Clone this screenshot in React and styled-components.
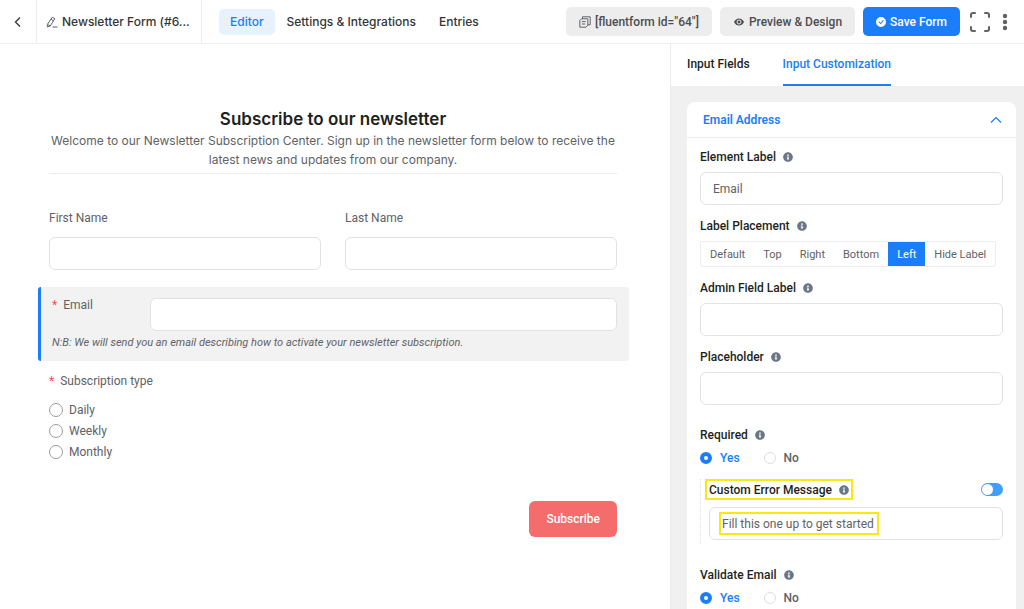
import { useState } from "react";
import styled, { createGlobalStyle } from "styled-components";
import { FaInfoCircle } from "react-icons/fa";
import { BsCheckCircleFill } from "react-icons/bs";

const GlobalStyle = createGlobalStyle`
  * {
    box-sizing: border-box;
  }
  body {
    margin: 0;
    background-color: #ffffff;
  }
  body, button, input {
    font-family: Roboto, "Liberation Sans", sans-serif;
    font-size: 12px;
    color: #606266;
  }
  button {
    padding: 0;
    border: none;
    background: none;
    cursor: pointer;
  }
`;

const PageWrap = styled.div`
  display: flex;
  flex-direction: column;
  height: 100vh;
`;

const TopBar = styled.header`
  display: flex;
  align-items: center;
  flex-shrink: 0;
  height: 44px;
  padding-right: 14px;
  border-bottom: 1px solid #efefef;
`;

const BackButton = styled.button`
  display: flex;
  align-items: center;
  justify-content: center;
  width: 37px;
  height: 100%;
  border-right: 1px solid #ececec;
`;

const FormName = styled.div`
  display: flex;
  align-items: center;
  gap: 4px;
  width: 165px;
  height: 100%;
  padding: 0 9px;
  border-right: 1px solid #ececec;
  font-family: Inter, "Liberation Sans", sans-serif;
  color: #353537;
  font-weight: 500;
  svg {
    flex-shrink: 0;
  }
  span {
    overflow: hidden;
    text-overflow: ellipsis;
    white-space: nowrap;
  }
`;

const Nav = styled.nav`
  display: flex;
  flex: 1;
  gap: 1px;
  padding-left: 17px;
`;

const NavLink = styled.a`
  padding: 0 11px;
  border-radius: 5px;
  line-height: 26px;
  font-family: Inter, "Liberation Sans", sans-serif;
  font-weight: 500;
  text-decoration: none;
  white-space: nowrap;
  color: ${(props) => (props.$active ? "#1a7efb" : "#353537")};
  background-color: ${(props) => (props.$active ? "#e8f2ff" : "transparent")};
`;

const Actions = styled.div`
  display: flex;
  align-items: center;
  gap: 8px;
`;

const ActionButton = styled.button`
  display: flex;
  align-items: center;
  gap: 4px;
  height: 29px;
  padding: 0 13px;
  border-radius: 5px;
  font-weight: 500;
  white-space: nowrap;
  color: ${(props) => (props.$primary ? "#ffffff" : "#4c4d4f")};
  background-color: ${(props) => (props.$primary ? "#1a7efb" : "#ededed")};
`;

const IconButton = styled.button`
  display: flex;
  align-items: center;
  padding: 0 2px;
  color: #606266;
`;

const ContentWrap = styled.div`
  display: flex;
  flex: 1;
  min-height: 0;
`;

const Canvas = styled.main`
  flex: 1;
  padding: 63px 41px 0 38px;
  overflow: auto;
  scrollbar-width: none;
`;

const Section = styled.section`
  padding: 0 12px 0 11px;
`;

const TitleWrap = styled.div`
  padding-bottom: 4px;
  border-bottom: 1px solid #ececec;
  font-family: Inter, "Liberation Sans", sans-serif;
  text-align: center;
  h1 {
    margin: 0;
    line-height: 24px;
    font-size: 17px;
    font-weight: 600;
    color: #1e1f21;
  }
  p {
    margin: 0;
    line-height: 19px;
  }
`;

const NameRow = styled.div`
  display: grid;
  grid-template-columns: 1fr 1fr;
  gap: 24px;
  padding: 34px 0 17px;
`;

const Field = styled.div`
  display: flex;
  flex-direction: column;
  gap: 9px;
  label {
    line-height: 20px;
  }
`;

const TextInput = styled.input`
  width: 100%;
  height: 33px;
  padding: 0 12px;
  border: 1px solid #e1e2e5;
  border-radius: 6px;
  background-color: #ffffff;
  outline: none;
`;

const SelectedField = styled.section`
  padding: 11px 12px 8px 11px;
  border-left: 3px solid #1a7efb;
  border-radius: 3px;
  background-color: #f2f2f2;
  p {
    margin: 2px 0 0;
    line-height: 20px;
    font-size: 11px;
    font-style: italic;
  }
`;

const SideLabelRow = styled.div`
  display: flex;
  align-items: flex-start;
  label {
    flex-shrink: 0;
    width: 98px;
    line-height: 14px;
  }
`;

const Star = styled.span`
  margin-right: 6px;
  color: #ff4d4f;
`;

const RadioList = styled.fieldset`
  display: flex;
  flex-direction: column;
  margin: 0;
  padding: 0;
  border: none;
  legend {
    margin-bottom: 8px;
    padding: 10px 0 0;
    line-height: 20px;
  }
  label {
    display: flex;
    align-items: center;
    gap: 6px;
    height: 21px;
  }
  input {
    appearance: none;
    width: 14px;
    height: 14px;
    margin: 0;
    border: 1px solid #9b9ca0;
    border-radius: 50%;
  }
  input:checked {
    border: 4px solid #1a7efb;
  }
`;

const SubmitWrap = styled.div`
  display: flex;
  justify-content: flex-end;
  padding-top: 39px;
`;

const SubmitButton = styled.button`
  height: 36px;
  padding: 0 17px;
  border-radius: 6px;
  background-color: #f56c6c;
  color: #ffffff;
  font-weight: 500;
`;

const Sidebar = styled.aside`
  display: flex;
  flex-direction: column;
  width: 354px;
  border-left: 1px solid #ececec;
  background-color: #f0f0f0;
`;

const TabBar = styled.div`
  display: flex;
  flex-shrink: 0;
  gap: 33px;
  padding: 0 16px;
  background-color: #ffffff;
`;

const Tab = styled.button`
  height: 42px;
  border-bottom: 2px solid ${(props) => (props.$active ? "#1a7efb" : "transparent")};
  color: ${(props) => (props.$active ? "#1a7efb" : "#1e1f21")};
  font-weight: 500;
`;

const PanelScroll = styled.div`
  flex: 1;
  padding: 16px 8px 0 16px;
  overflow: auto;
  scrollbar-width: none;
`;

const Panel = styled.section`
  border-radius: 8px;
  background-color: #ffffff;
`;

const PanelHeader = styled.button`
  display: flex;
  align-items: center;
  justify-content: space-between;
  width: 100%;
  height: 36px;
  padding: 0 14px 0 16px;
  border-bottom: 1px solid #ececec;
  color: #1a7efb;
  font-weight: 600;
`;

const PanelBody = styled.div`
  padding: 9px 13px 13px;
`;

const Setting = styled.div`
  display: flex;
  flex-direction: column;
  gap: ${(props) => props.$gap || 5}px;
  margin-bottom: ${(props) => props.$space || 11}px;
`;

const LabelWrap = styled.div`
  display: flex;
  align-items: center;
  gap: 7px;
  height: 20px;
  color: #1e1f21;
  font-weight: 500;
  svg {
    color: #6b7785;
  }
`;

const Placements = styled.div`
  display: flex;
  align-self: flex-start;
  height: 26px;
  border: 1px solid #ededed;
  border-radius: 3px;
`;

const PlacementButton = styled.button`
  padding: 0 9px;
  font-size: 11px;
  white-space: nowrap;
  color: ${(props) => (props.$active ? "#ffffff" : "#606266")};
  background-color: ${(props) => (props.$active ? "#1a7efb" : "transparent")};
`;

const YesNoWrap = styled.div`
  display: flex;
  gap: 24px;
  height: 20px;
  label {
    display: flex;
    align-items: center;
    gap: 8px;
    font-weight: 500;
    color: #606266;
  }
  label:has(input:checked) {
    color: #1a7efb;
  }
  input {
    appearance: none;
    width: 12px;
    height: 12px;
    margin: 0;
    border: 1px solid #dcdfe6;
    border-radius: 50%;
  }
  input:checked {
    border: 4px solid #1a7efb;
  }
`;

const ErrorGroup = styled.div`
  margin-bottom: 21px;
  padding: 0 0 4px 4px;
  border-left: 1px dotted #dcdfe6;
`;

const ErrorHead = styled.div`
  display: flex;
  align-items: center;
  justify-content: space-between;
  margin-bottom: 7px;
`;

const Highlight = styled.div`
  padding: 0 2px;
  border: 2px solid #f5ea14;
  ${LabelWrap} {
    height: 17px;
  }
`;

const Switch = styled.input`
  display: flex;
  align-items: center;
  appearance: none;
  width: 22px;
  height: 13px;
  margin: 0;
  padding: 1px;
  border-radius: 7px;
  background-color: #409eff;
  &::before {
    content: "";
    width: 11px;
    height: 11px;
    border-radius: 50%;
    background-color: #ffffff;
  }
`;

const MessageBox = styled.div`
  display: flex;
  align-items: center;
  height: 33px;
  margin-left: 4px;
  padding: 0 9px;
  border: 1px solid #e1e2e5;
  border-radius: 6px;
  input {
    width: 160px;
    height: 23px;
    padding: 0 1px;
    border: 2px solid #f5ea14;
    background-color: #ffffff;
    outline: none;
  }
`;

const BackIcon = () => (
  <svg width="8" height="12" viewBox="0 0 8 12" fill="none" stroke="#353537" strokeWidth="1.3">
    <path d="M6 1.5L1.5 6L6 10.5" />
  </svg>
);

const EditIcon = () => (
  <svg width="12" height="12" viewBox="0 0 12 12" fill="none" stroke="#606266" strokeLinejoin="round">
    <path d="M6.2 1.2L8.8 2.7L4.2 10L1.3 11L1.4 8.4Z" />
    <path d="M5 3.2L7.5 4.8M1.6 8.4L4 9.8M6.5 11H11.5" />
  </svg>
);

const CopyIcon = () => (
  <svg width="12" height="12" viewBox="0 0 12 12" fill="none" stroke="#606266" strokeLinejoin="round">
    <path d="M3.5 2.8V0.8H11.2V8.8H9" />
    <path d="M2.5 2.8H8.8V9.2L7 11.2H0.8V4.5Z" />
    <path d="M2.8 5.6H6.8M2.8 8H6.2" />
  </svg>
);

const EyeIcon = () => (
  <svg width="12" height="10" viewBox="0 0 12 10" fill="currentColor">
    <path d="M1 5C3.2 0.2 8.8 0.2 11 5C8.8 9.8 3.2 9.8 1 5Z" />
    <circle cx="6" cy="5" r="2" stroke="#ededed" />
  </svg>
);

const ExpandIcon = () => (
  <svg width="20" height="20" viewBox="0 0 20 20" fill="none" stroke="currentColor" strokeWidth="2" strokeLinecap="round">
    <path d="M1 5V3Q1 1 3 1H5M15 1H17Q19 1 19 3V5M19 15V17Q19 19 17 19H15M5 19H3Q1 19 1 17V15" />
  </svg>
);

const MoreIcon = () => (
  <svg width="6" height="18" viewBox="0 0 6 18" fill="currentColor">
    <circle cx="3" cy="3" r="2.2" />
    <circle cx="3" cy="9" r="2.2" />
    <circle cx="3" cy="15" r="2.2" />
  </svg>
);

const ChevronUpIcon = () => (
  <svg width="12" height="8" viewBox="0 0 12 8" fill="none" stroke="currentColor" strokeWidth="1.2">
    <path d="M1 6.5L6 1.5L11 6.5" />
  </svg>
);

const SettingLabel = ({ htmlFor, children }) => (
  <LabelWrap>
    {htmlFor ? <label htmlFor={htmlFor}>{children}</label> : <span>{children}</span>}
    <FaInfoCircle size={10} />
  </LabelWrap>
);

const YesNo = ({ name }) => (
  <YesNoWrap role="radiogroup" aria-label={name}>
    <label>
      <input type="radio" name={name} defaultChecked />
      Yes
    </label>
    <label>
      <input type="radio" name={name} />
      No
    </label>
  </YesNoWrap>
);

const placements = ["Default", "Top", "Right", "Bottom", "Left", "Hide Label"];

const App = () => {
  const [placement, setPlacement] = useState("Left");

  return (
    <PageWrap>
      <GlobalStyle />
      <TopBar>
        <BackButton aria-label="Back">
          <BackIcon />
        </BackButton>
        <FormName>
          <EditIcon />
          <span>Newsletter Form (#6...</span>
        </FormName>
        <Nav>
          <NavLink href="#editor" $active>
            Editor
          </NavLink>
          <NavLink href="#settings">Settings & Integrations</NavLink>
          <NavLink href="#entries">Entries</NavLink>
        </Nav>
        <Actions>
          <ActionButton>
            <CopyIcon />
            [fluentform id="64"]
          </ActionButton>
          <ActionButton>
            <EyeIcon />
            Preview & Design
          </ActionButton>
          <ActionButton $primary>
            <BsCheckCircleFill size={10} />
            Save Form
          </ActionButton>
          <IconButton aria-label="Fullscreen">
            <ExpandIcon />
          </IconButton>
          <IconButton aria-label="More">
            <MoreIcon />
          </IconButton>
        </Actions>
      </TopBar>

      <ContentWrap>
        <Canvas>
          <Section>
            <TitleWrap>
              <h1>Subscribe to our newsletter</h1>
              <p>
                Welcome to our Newsletter Subscription Center. Sign up in the
                newsletter form below to receive the latest news and updates
                from our company.
              </p>
            </TitleWrap>
            <NameRow>
              <Field>
                <label htmlFor="first">First Name</label>
                <TextInput id="first" />
              </Field>
              <Field>
                <label htmlFor="last">Last Name</label>
                <TextInput id="last" />
              </Field>
            </NameRow>
          </Section>

          <SelectedField>
            <SideLabelRow>
              <label htmlFor="email">
                <Star>*</Star>Email
              </label>
              <TextInput id="email" type="email" />
            </SideLabelRow>
            <p>
              N:B: We will send you an email describing how to activate your
              newsletter subscription.
            </p>
          </SelectedField>

          <Section>
            <RadioList>
              <legend>
                <Star>*</Star>Subscription type
              </legend>
              {["Daily", "Weekly", "Monthly"].map((option) => (
                <label key={option}>
                  <input type="radio" name="subscription" />
                  {option}
                </label>
              ))}
            </RadioList>
            <SubmitWrap>
              <SubmitButton>Subscribe</SubmitButton>
            </SubmitWrap>
          </Section>
        </Canvas>

        <Sidebar>
          <TabBar>
            <Tab>Input Fields</Tab>
            <Tab $active>Input Customization</Tab>
          </TabBar>
          <PanelScroll>
            <Panel>
              <PanelHeader>
                Email Address
                <ChevronUpIcon />
              </PanelHeader>
              <PanelBody>
                <Setting>
                  <SettingLabel htmlFor="elementLabel">Element Label</SettingLabel>
                  <TextInput id="elementLabel" defaultValue="Email" />
                </Setting>
                <Setting>
                  <SettingLabel>Label Placement</SettingLabel>
                  <Placements>
                    {placements.map((item) => (
                      <PlacementButton
                        key={item}
                        $active={item === placement}
                        onClick={() => setPlacement(item)}
                      >
                        {item}
                      </PlacementButton>
                    ))}
                  </Placements>
                </Setting>
                <Setting>
                  <SettingLabel htmlFor="adminLabel">Admin Field Label</SettingLabel>
                  <TextInput id="adminLabel" />
                </Setting>
                <Setting $space={20}>
                  <SettingLabel htmlFor="placeholder">Placeholder</SettingLabel>
                  <TextInput id="placeholder" />
                </Setting>
                <Setting $gap={3}>
                  <SettingLabel>Required</SettingLabel>
                  <YesNo name="Required" />
                </Setting>
                <ErrorGroup>
                  <ErrorHead>
                    <Highlight>
                      <SettingLabel htmlFor="errorMessage">Custom Error Message</SettingLabel>
                    </Highlight>
                    <Switch type="checkbox" role="switch" aria-label="Custom Error Message" />
                  </ErrorHead>
                  <MessageBox>
                    <input id="errorMessage" defaultValue="Fill this one up to get started" />
                  </MessageBox>
                </ErrorGroup>
                <Setting $gap={3}>
                  <SettingLabel>Validate Email</SettingLabel>
                  <YesNo name="Validate Email" />
                </Setting>
              </PanelBody>
            </Panel>
          </PanelScroll>
        </Sidebar>
      </ContentWrap>
    </PageWrap>
  );
};

export default App;
